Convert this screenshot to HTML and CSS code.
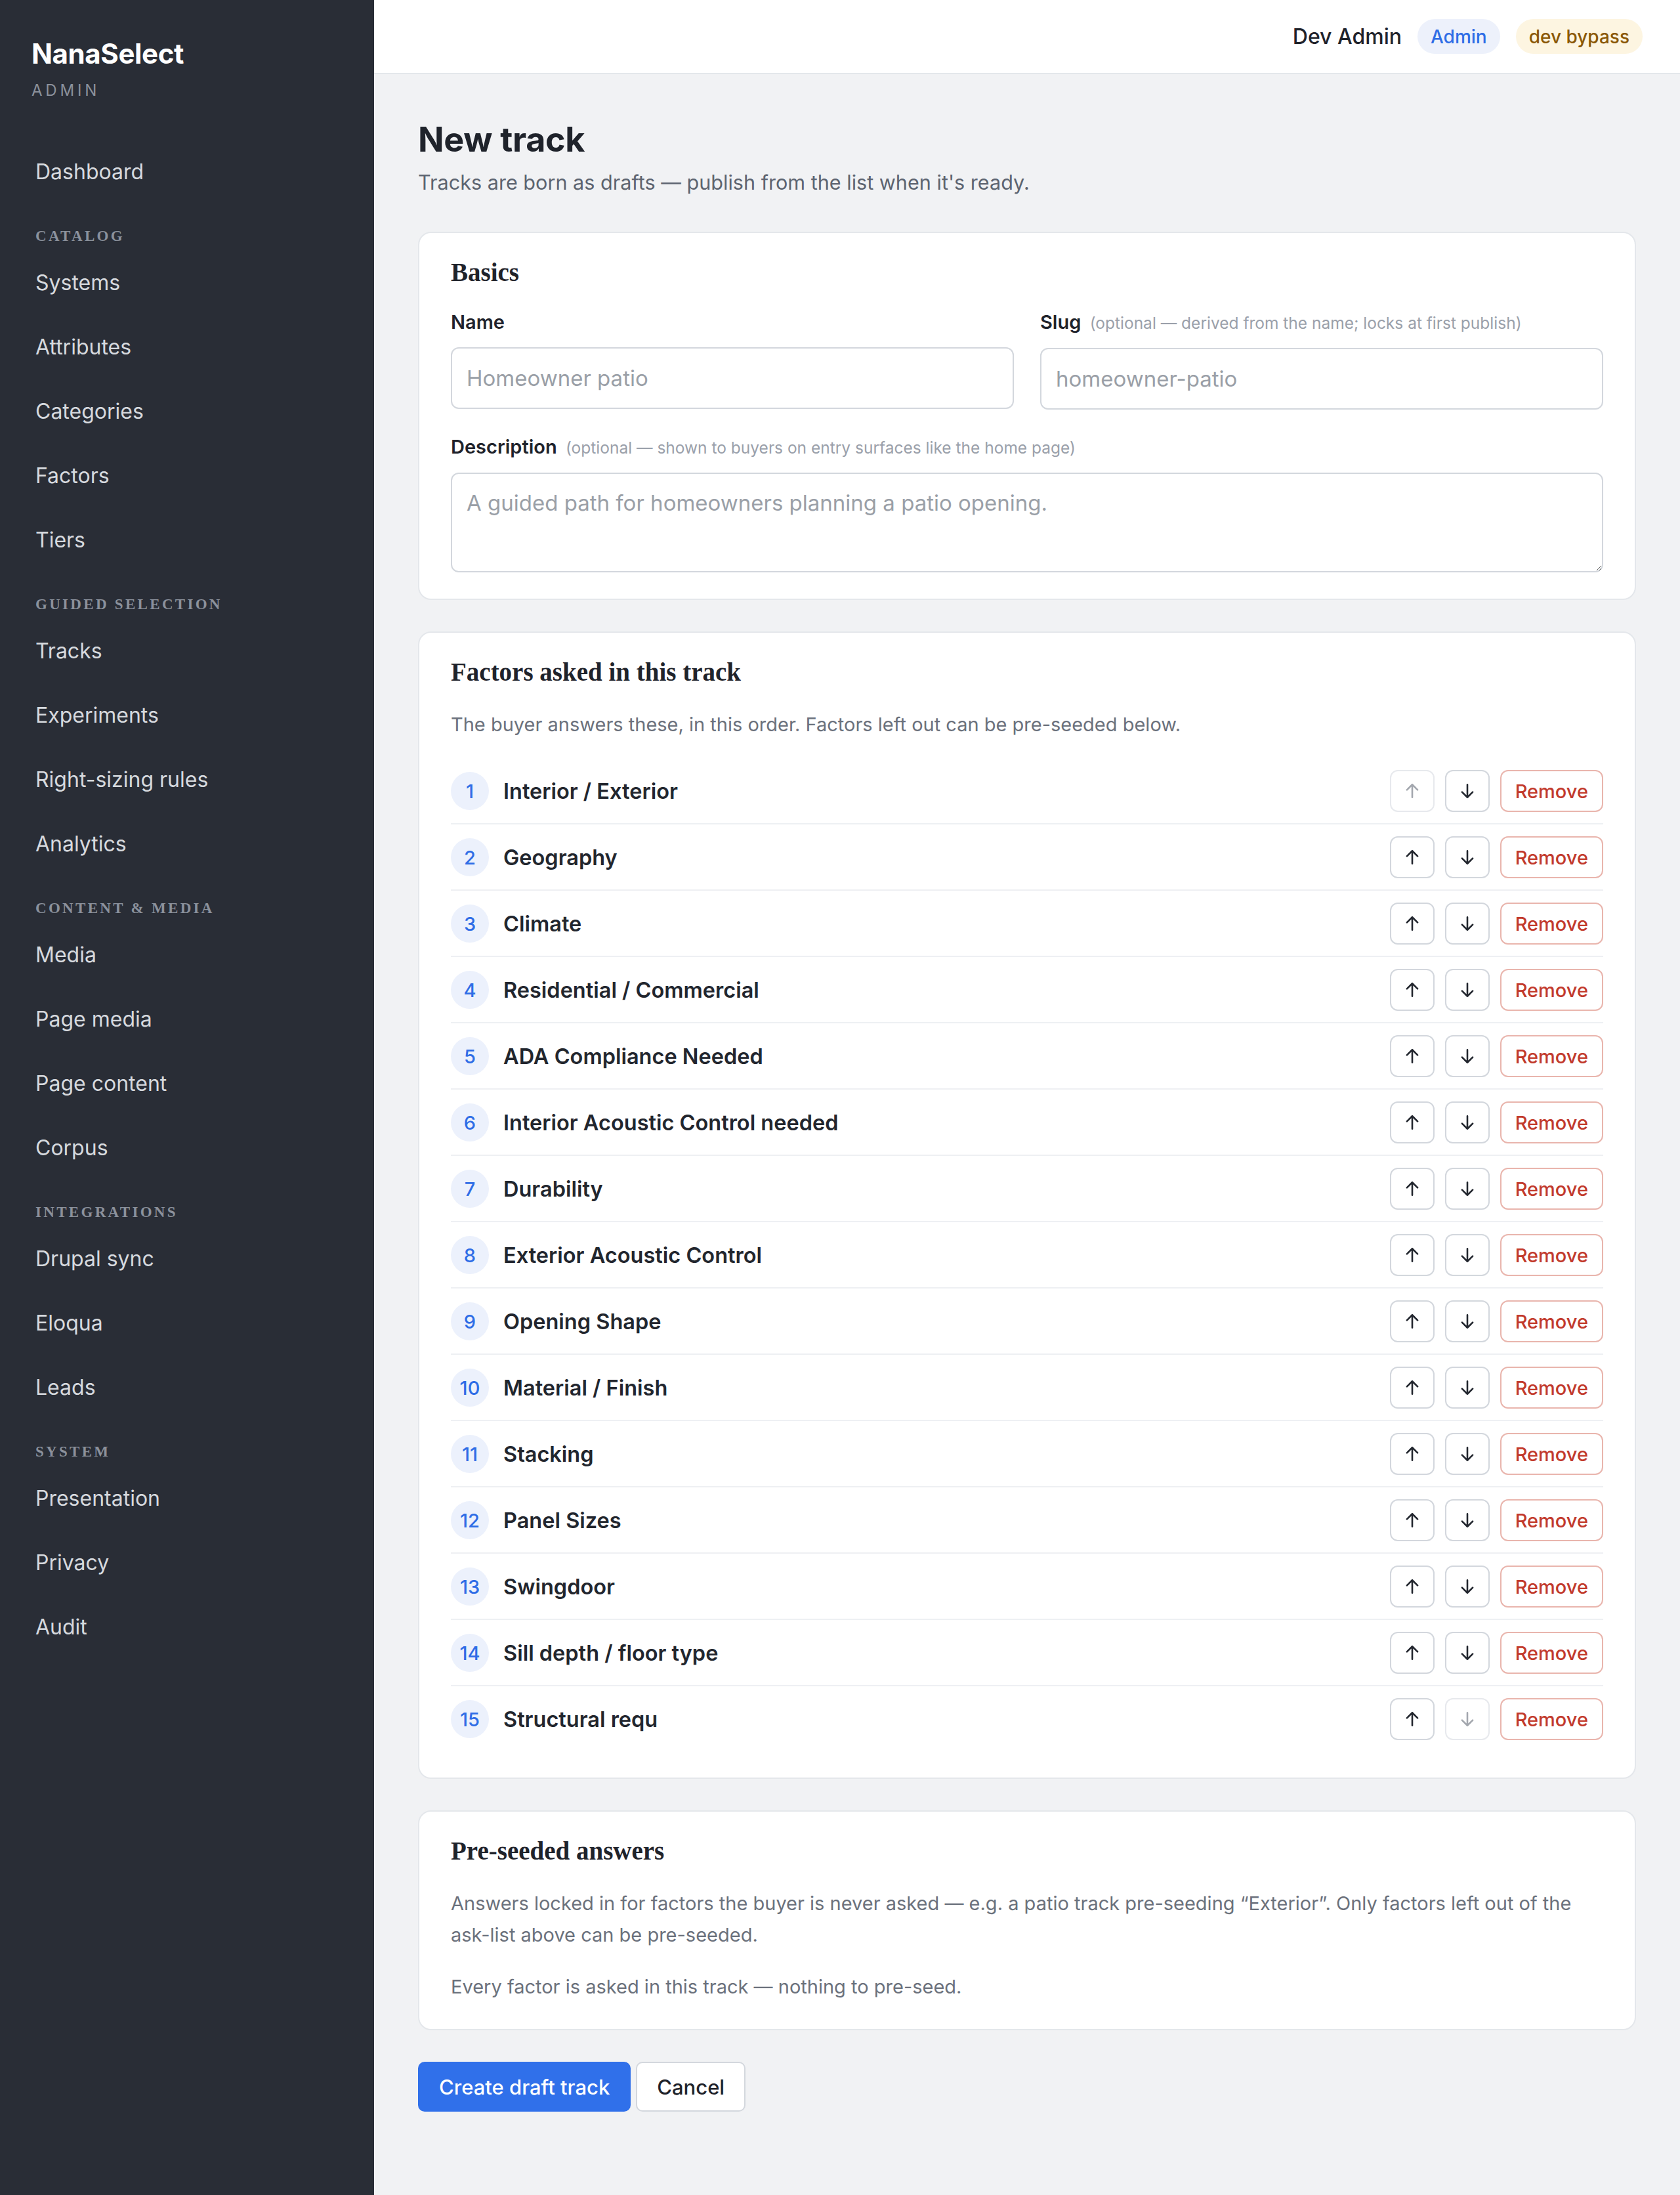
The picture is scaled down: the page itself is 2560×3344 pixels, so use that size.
FILE: index.html
```html
<!DOCTYPE html>
<html lang="en">
<head>
<meta charset="utf-8">
<title>New track · NanaSelect Admin</title>
<link rel="stylesheet" href="styles.css">
</head>
<body>
<div class="app">
  <aside class="sidebar">
    <div class="brand">
      <div class="brand-name">NanaSelect</div>
      <div class="brand-sub">ADMIN</div>
    </div>
    <nav class="nav">
      <a class="nav-item">Dashboard</a>
      <div class="nav-label">Catalog</div>
      <a class="nav-item">Systems</a>
      <a class="nav-item">Attributes</a>
      <a class="nav-item">Categories</a>
      <a class="nav-item">Factors</a>
      <a class="nav-item">Tiers</a>
      <div class="nav-label">Guided selection</div>
      <a class="nav-item">Tracks</a>
      <a class="nav-item">Experiments</a>
      <a class="nav-item">Right-sizing rules</a>
      <a class="nav-item">Analytics</a>
      <div class="nav-label">Content &amp; media</div>
      <a class="nav-item">Media</a>
      <a class="nav-item">Page media</a>
      <a class="nav-item">Page content</a>
      <a class="nav-item">Corpus</a>
      <div class="nav-label">Integrations</div>
      <a class="nav-item">Drupal sync</a>
      <a class="nav-item">Eloqua</a>
      <a class="nav-item">Leads</a>
      <div class="nav-label">System</div>
      <a class="nav-item">Presentation</a>
      <a class="nav-item">Privacy</a>
      <a class="nav-item">Audit</a>
    </nav>
  </aside>

  <div class="main">
    <header class="topbar">
      <span class="user">Dev Admin</span>
      <span class="badge badge-blue">Admin</span>
      <span class="badge badge-amber">dev bypass</span>
    </header>

    <main class="content">
      <h1 class="title">New track</h1>
      <p class="lead">Tracks are born as drafts — publish from the list when it's ready.</p>

      <section class="card">
        <h2 class="card-title">Basics</h2>
        <div class="field-row">
          <div class="field">
            <label class="label">Name</label>
            <input class="input" type="text" placeholder="Homeowner patio">
          </div>
          <div class="field">
            <label class="label">Slug <span class="hint">(optional — derived from the name; locks at first publish)</span></label>
            <input class="input" type="text" placeholder="homeowner-patio">
          </div>
        </div>
        <div class="field">
          <label class="label">Description <span class="hint">(optional — shown to buyers on entry surfaces like the home page)</span></label>
          <textarea class="input textarea" placeholder="A guided path for homeowners planning a patio opening."></textarea>
        </div>
      </section>

      <section class="card">
        <h2 class="card-title">Factors asked in this track</h2>
        <p class="card-text">The buyer answers these, in this order. Factors left out can be pre-seeded below.</p>
        <ol class="factor-list">
          <li class="factor"><span class="num">1</span><span class="factor-name">Interior / Exterior</span>
            <button class="icon-btn" disabled><svg viewBox="0 0 24 24"><path d="M12 21V3M4.5 10.5L12 3l7.5 7.5"/></svg></button>
            <button class="icon-btn"><svg viewBox="0 0 24 24"><path d="M12 3v18M4.5 13.5L12 21l7.5-7.5"/></svg></button>
            <button class="remove-btn">Remove</button></li>
          <li class="factor"><span class="num">2</span><span class="factor-name">Geography</span>
            <button class="icon-btn"><svg viewBox="0 0 24 24"><path d="M12 21V3M4.5 10.5L12 3l7.5 7.5"/></svg></button>
            <button class="icon-btn"><svg viewBox="0 0 24 24"><path d="M12 3v18M4.5 13.5L12 21l7.5-7.5"/></svg></button>
            <button class="remove-btn">Remove</button></li>
          <li class="factor"><span class="num">3</span><span class="factor-name">Climate</span>
            <button class="icon-btn"><svg viewBox="0 0 24 24"><path d="M12 21V3M4.5 10.5L12 3l7.5 7.5"/></svg></button>
            <button class="icon-btn"><svg viewBox="0 0 24 24"><path d="M12 3v18M4.5 13.5L12 21l7.5-7.5"/></svg></button>
            <button class="remove-btn">Remove</button></li>
          <li class="factor"><span class="num">4</span><span class="factor-name">Residential / Commercial</span>
            <button class="icon-btn"><svg viewBox="0 0 24 24"><path d="M12 21V3M4.5 10.5L12 3l7.5 7.5"/></svg></button>
            <button class="icon-btn"><svg viewBox="0 0 24 24"><path d="M12 3v18M4.5 13.5L12 21l7.5-7.5"/></svg></button>
            <button class="remove-btn">Remove</button></li>
          <li class="factor"><span class="num">5</span><span class="factor-name">ADA Compliance Needed</span>
            <button class="icon-btn"><svg viewBox="0 0 24 24"><path d="M12 21V3M4.5 10.5L12 3l7.5 7.5"/></svg></button>
            <button class="icon-btn"><svg viewBox="0 0 24 24"><path d="M12 3v18M4.5 13.5L12 21l7.5-7.5"/></svg></button>
            <button class="remove-btn">Remove</button></li>
          <li class="factor"><span class="num">6</span><span class="factor-name">Interior Acoustic Control needed</span>
            <button class="icon-btn"><svg viewBox="0 0 24 24"><path d="M12 21V3M4.5 10.5L12 3l7.5 7.5"/></svg></button>
            <button class="icon-btn"><svg viewBox="0 0 24 24"><path d="M12 3v18M4.5 13.5L12 21l7.5-7.5"/></svg></button>
            <button class="remove-btn">Remove</button></li>
          <li class="factor"><span class="num">7</span><span class="factor-name">Durability</span>
            <button class="icon-btn"><svg viewBox="0 0 24 24"><path d="M12 21V3M4.5 10.5L12 3l7.5 7.5"/></svg></button>
            <button class="icon-btn"><svg viewBox="0 0 24 24"><path d="M12 3v18M4.5 13.5L12 21l7.5-7.5"/></svg></button>
            <button class="remove-btn">Remove</button></li>
          <li class="factor"><span class="num">8</span><span class="factor-name">Exterior Acoustic Control</span>
            <button class="icon-btn"><svg viewBox="0 0 24 24"><path d="M12 21V3M4.5 10.5L12 3l7.5 7.5"/></svg></button>
            <button class="icon-btn"><svg viewBox="0 0 24 24"><path d="M12 3v18M4.5 13.5L12 21l7.5-7.5"/></svg></button>
            <button class="remove-btn">Remove</button></li>
          <li class="factor"><span class="num">9</span><span class="factor-name">Opening Shape</span>
            <button class="icon-btn"><svg viewBox="0 0 24 24"><path d="M12 21V3M4.5 10.5L12 3l7.5 7.5"/></svg></button>
            <button class="icon-btn"><svg viewBox="0 0 24 24"><path d="M12 3v18M4.5 13.5L12 21l7.5-7.5"/></svg></button>
            <button class="remove-btn">Remove</button></li>
          <li class="factor"><span class="num">10</span><span class="factor-name">Material / Finish</span>
            <button class="icon-btn"><svg viewBox="0 0 24 24"><path d="M12 21V3M4.5 10.5L12 3l7.5 7.5"/></svg></button>
            <button class="icon-btn"><svg viewBox="0 0 24 24"><path d="M12 3v18M4.5 13.5L12 21l7.5-7.5"/></svg></button>
            <button class="remove-btn">Remove</button></li>
          <li class="factor"><span class="num">11</span><span class="factor-name">Stacking</span>
            <button class="icon-btn"><svg viewBox="0 0 24 24"><path d="M12 21V3M4.5 10.5L12 3l7.5 7.5"/></svg></button>
            <button class="icon-btn"><svg viewBox="0 0 24 24"><path d="M12 3v18M4.5 13.5L12 21l7.5-7.5"/></svg></button>
            <button class="remove-btn">Remove</button></li>
          <li class="factor"><span class="num">12</span><span class="factor-name">Panel Sizes</span>
            <button class="icon-btn"><svg viewBox="0 0 24 24"><path d="M12 21V3M4.5 10.5L12 3l7.5 7.5"/></svg></button>
            <button class="icon-btn"><svg viewBox="0 0 24 24"><path d="M12 3v18M4.5 13.5L12 21l7.5-7.5"/></svg></button>
            <button class="remove-btn">Remove</button></li>
          <li class="factor"><span class="num">13</span><span class="factor-name">Swingdoor</span>
            <button class="icon-btn"><svg viewBox="0 0 24 24"><path d="M12 21V3M4.5 10.5L12 3l7.5 7.5"/></svg></button>
            <button class="icon-btn"><svg viewBox="0 0 24 24"><path d="M12 3v18M4.5 13.5L12 21l7.5-7.5"/></svg></button>
            <button class="remove-btn">Remove</button></li>
          <li class="factor"><span class="num">14</span><span class="factor-name">Sill depth / floor type</span>
            <button class="icon-btn"><svg viewBox="0 0 24 24"><path d="M12 21V3M4.5 10.5L12 3l7.5 7.5"/></svg></button>
            <button class="icon-btn"><svg viewBox="0 0 24 24"><path d="M12 3v18M4.5 13.5L12 21l7.5-7.5"/></svg></button>
            <button class="remove-btn">Remove</button></li>
          <li class="factor"><span class="num">15</span><span class="factor-name">Structural requ</span>
            <button class="icon-btn"><svg viewBox="0 0 24 24"><path d="M12 21V3M4.5 10.5L12 3l7.5 7.5"/></svg></button>
            <button class="icon-btn" disabled><svg viewBox="0 0 24 24"><path d="M12 3v18M4.5 13.5L12 21l7.5-7.5"/></svg></button>
            <button class="remove-btn">Remove</button></li>
        </ol>
      </section>

      <section class="card">
        <h2 class="card-title">Pre-seeded answers</h2>
        <p class="card-text">Answers locked in for factors the buyer is never asked — e.g. a patio track pre-seeding “Exterior”. Only factors left out of the ask-list above can be pre-seeded.</p>
        <p class="card-text card-text-gap">Every factor is asked in this track — nothing to pre-seed.</p>
      </section>

      <div class="actions">
        <button class="btn btn-primary">Create draft track</button>
        <button class="btn btn-secondary">Cancel</button>
      </div>
    </main>
  </div>
</div>
</body>
</html>
```

FILE: styles.css
```css
* { box-sizing: border-box; }

html, body {
  margin: 0;
  padding: 0;
}

body {
  font-family: Inter, "Noto Sans", "Liberation Sans", sans-serif;
  color: #1f232b;
  background: #f1f2f4;
}

.app {
  display: grid;
  grid-template-columns: 570px 1fr;
  min-height: 100vh;
}

/* ---------- Sidebar ---------- */
.sidebar {
  background: #292d36;
  padding: 57px 0 40px 0;
}

.brand {
  padding-left: 48px;
}

.brand-name {
  font-size: 42px;
  line-height: 50px;
  font-weight: 700;
  color: #ffffff;
  letter-spacing: -0.4px;
}

.brand-sub {
  margin-top: 15px;
  font-size: 24px;
  line-height: 32px;
  letter-spacing: 4.8px;
  color: #8b919c;
}

.nav {
  margin-top: 59px;
  display: flex;
  flex-direction: column;
}

.nav-item {
  display: block;
  height: 98px;
  line-height: 98px;
  padding-left: 54px;
  font-size: 32px;
  color: #d6d9de;
  text-decoration: none;
}

.nav-label {
  margin: 33px 0 6px 0;
  padding-left: 54px;
  font-family: "Liberation Serif", "Times New Roman", serif;
  font-weight: 700;
  font-size: 23px;
  line-height: 32px;
  letter-spacing: 3.3px;
  text-transform: uppercase;
  color: #8b919c;
}

/* ---------- Main ---------- */
.main {
  display: flex;
  flex-direction: column;
  min-width: 0;
}

.topbar {
  height: 113px;
  background: #ffffff;
  border-bottom: 2px solid #e4e7eb;
  display: flex;
  align-items: center;
  justify-content: flex-end;
  gap: 24px;
  padding: 0 57px;
}

.user {
  font-size: 32px;
  font-weight: 500;
  color: #1f232b;
}

.badge {
  display: inline-flex;
  align-items: center;
  height: 53px;
  padding: 0 20px;
  border-radius: 999px;
  font-size: 28px;
  font-weight: 500;
}

.badge-blue {
  background: #edf1fb;
  color: #2f6de6;
}

.badge-amber {
  background: #fdf5e1;
  color: #8a5806;
}

.content {
  padding: 69px 67px 80px 67px;
}

.title {
  margin: 0;
  font-size: 52px;
  line-height: 62px;
  font-weight: 700;
  color: #1f232b;
  letter-spacing: -0.3px;
}

.lead {
  margin: 11px 0 0 0;
  font-size: 30.6px;
  line-height: 45px;
  color: #5d6470;
}

.card {
  margin-top: 53px;
  background: #ffffff;
  border: 2px solid #e4e7eb;
  border-radius: 20px;
  padding: 38px 48px 40px 48px;
}

.card + .card {
  margin-top: 48px;
}

.card-title {
  margin: 0 0 34px 0;
  font-family: "Liberation Serif", "Times New Roman", serif;
  font-weight: 700;
  font-size: 39px;
  line-height: 44px;
  color: #1f232b;
}

.card-text {
  margin: 0;
  font-size: 29px;
  line-height: 48px;
  color: #6b717c;
}

.card-text-gap {
  margin-top: 31px;
}

/* ---------- Form ---------- */
.field-row {
  display: grid;
  grid-template-columns: 1fr 1fr;
  gap: 40px;
  margin-bottom: 37px;
}

.field {
  display: flex;
  flex-direction: column;
}

.label {
  display: block;
  font-size: 29px;
  line-height: 40px;
  font-weight: 600;
  color: #1f232b;
  margin-bottom: 18px;
}

.hint {
  margin-left: 6px;
  font-size: 24.5px;
  font-weight: 400;
  color: #9aa0aa;
}

.input {
  width: 100%;
  height: 94px;
  border: 2px solid #d3d7dd;
  border-radius: 12px;
  padding: 0 22px;
  font-family: Inter, "Noto Sans", "Liberation Sans", sans-serif;
  font-size: 33px;
  color: #1f232b;
  background: #ffffff;
  outline: none;
}

.input::placeholder {
  color: #9a9fa7;
}

.textarea {
  height: 152px;
  padding: 21px 22px;
  line-height: 46px;
  resize: vertical;
  display: block;
}

/* ---------- Factor list ---------- */
.factor-list {
  list-style: none;
  margin: 27px 0 0 0;
  padding: 0;
}

.factor {
  display: flex;
  align-items: center;
  gap: 16px;
  padding: 18px 0 17px 0;
  border-bottom: 2px solid #eef0f3;
}

.factor:last-child {
  border-bottom: none;
}

.num {
  flex: none;
  width: 58px;
  height: 58px;
  border-radius: 50%;
  background: #ecf1fc;
  color: #2f6de6;
  font-size: 29px;
  font-weight: 500;
  display: flex;
  align-items: center;
  justify-content: center;
}

.factor-name {
  flex: 1;
  margin-left: 6px;
  font-size: 32.5px;
  font-weight: 600;
  color: #22262e;
}

.icon-btn {
  flex: none;
  width: 68px;
  height: 64px;
  border: 2px solid #d3d7dd;
  border-radius: 12px;
  background: #ffffff;
  display: flex;
  align-items: center;
  justify-content: center;
  padding: 0;
  color: #22262e;
}

.icon-btn svg {
  width: 26px;
  height: 26px;
  fill: none;
  stroke: currentColor;
  stroke-width: 2.4;
  stroke-linecap: round;
  stroke-linejoin: round;
}

.icon-btn:disabled {
  border-color: #e7e9ed;
  color: #a3a7ae;
}

.remove-btn {
  flex: none;
  height: 64px;
  padding: 0 21px;
  border: 2px solid #e9b5ad;
  border-radius: 12px;
  background: #ffffff;
  color: #c23a2c;
  font-family: Inter, "Noto Sans", "Liberation Sans", sans-serif;
  font-size: 29px;
  font-weight: 500;
}

/* ---------- Actions ---------- */
.actions {
  margin-top: 48px;
  display: flex;
  gap: 8px;
}

.btn {
  height: 76px;
  padding: 0 30px;
  border-radius: 10px;
  font-family: Inter, "Noto Sans", "Liberation Sans", sans-serif;
  font-size: 31px;
  font-weight: 500;
}

.btn-primary {
  background: #3070ea;
  color: #ffffff;
  border: 2px solid #3070ea;
}

.btn-secondary {
  background: #ffffff;
  color: #1f232b;
  border: 2px solid #d3d7dd;
}
```
